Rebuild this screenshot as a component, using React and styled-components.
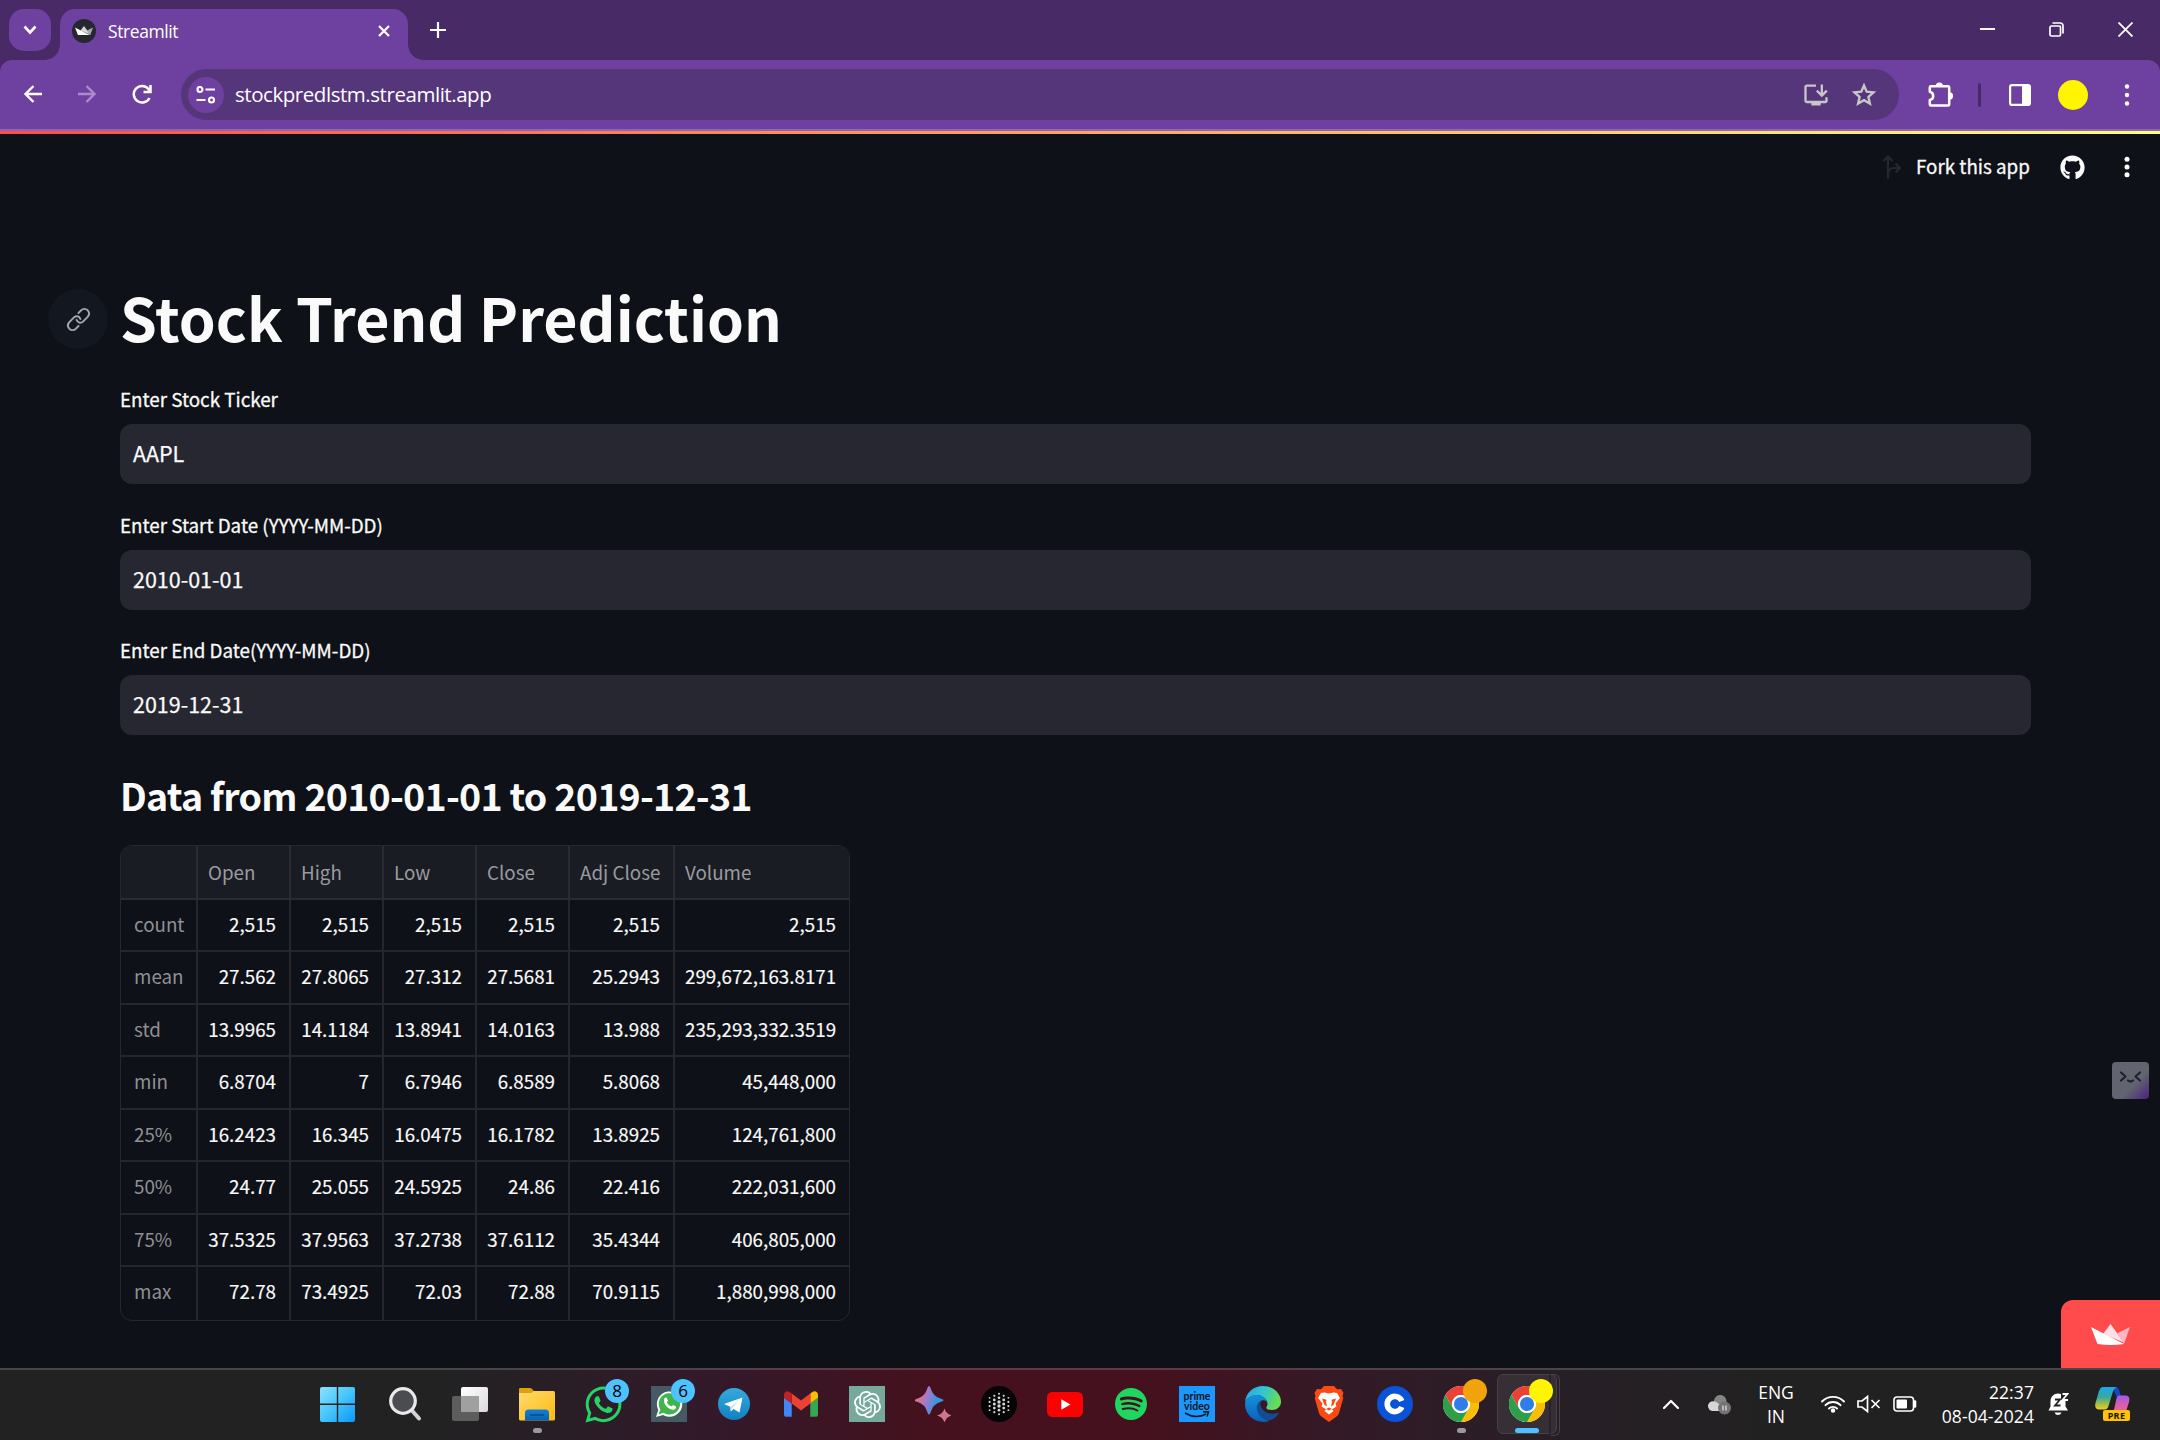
import React from 'react';
import styled, { createGlobalStyle, css } from 'styled-components';
import { FaGithub, FaWhatsapp } from 'react-icons/fa';
import { SiOpenai, SiSpotify } from 'react-icons/si';
import { MdInstallDesktop } from 'react-icons/md';

const source = '"Noto Sans CJK SC", "Noto Sans", sans-serif';
const segoe = '"Open Sans", "Noto Sans", sans-serif';

const Global = createGlobalStyle`
  * { box-sizing: border-box; }
  body { margin: 0; background: #0e1117; overflow: hidden; }
  svg { display: block; flex: none; }
`;

const Screen = styled.div`
  display: flex;
  flex-direction: column;
  width: 2160px;
  height: 1440px;
  color: #fff;
  font-family: ${segoe};
`;

/* ---------- browser chrome ---------- */
const TabStrip = styled.div`
  display: flex;
  align-items: flex-end;
  height: 60px;
  flex: none;
  padding-left: 9px;
  background: #472a66;
`;
const TabSearch = styled.div`
  display: grid;
  place-items: center;
  width: 42px;
  height: 42px;
  margin: 0 9px 9px 0;
  border-radius: 15px;
  background: #6e41a0;
`;
const Tab = styled.div`
  position: relative;
  display: flex;
  align-items: center;
  width: 348px;
  height: 51px;
  padding: 0 18px 8px 12px;
  border-radius: 15px 15px 0 0;
  background: #6e41a0;
  &::before, &::after {
    content: '';
    position: absolute;
    bottom: 0;
    width: 15px;
    height: 15px;
  }
  &::before { left: -15px; background: radial-gradient(circle at 0 0, transparent 14.5px, #6e41a0 15px); }
  &::after { right: -15px; background: radial-gradient(circle at 100% 0, transparent 14.5px, #6e41a0 15px); }
`;
const Favicon = styled.div`
  display: grid;
  place-items: center;
  width: 24px;
  height: 24px;
  margin-right: 12px;
  border-radius: 50%;
  background: #262730;
`;
const TabTitle = styled.div`
  flex: 1;
  font-size: 17.5px;
  letter-spacing: -0.4px;
  line-height: 24px;
  padding-top: 1px;
`;
const NewTab = styled.div`
  margin: 0 0 22px 22px;
`;
const WindowButtons = styled.div`
  display: flex;
  gap: 54px;
  margin: 0 27px 23px auto;
`;
const ToolbarBack = styled.div`
  flex: none;
  background: #472a66;
`;
const Toolbar = styled.div`
  display: flex;
  align-items: center;
  height: 71px;
  padding: 0 30px 0 23px;
  border-bottom: 2px solid #8c67b3;
  border-radius: 12px 12px 0 0;
  background: #6e41a0;
`;
const NavButtons = styled.div`
  display: flex;
  align-items: center;
  gap: 34px;
  width: 158px;
  padding-bottom: 1px;
`;
const Omnibox = styled.div`
  display: flex;
  align-items: center;
  width: 1718px;
  height: 51px;
  padding: 0 22px 0 7px;
  border-radius: 26px;
  background: #55367a;
  color: #c7c7c7;
`;
const SiteInfo = styled.div`
  display: grid;
  place-items: center;
  width: 36px;
  height: 36px;
  border-radius: 50%;
  background: #6e41a0;
`;
const Url = styled.div`
  flex: 1;
  padding: 0 0 2px 11px;
  color: #fff;
  font-size: 20.5px;
  letter-spacing: -0.45px;
  line-height: 28px;
`;
const OmniActions = styled.div`
  display: flex;
  align-items: center;
  gap: 21px;
`;
const Extensions = styled.div`
  display: flex;
  align-items: center;
  margin-left: auto;
`;
const Separator = styled.div`
  width: 3px;
  height: 24px;
  margin: 0 28px 0 24px;
  border-radius: 2px;
  background: #472a66;
`;
const Avatar = styled.div`
  width: 30px;
  height: 30px;
  margin: 0 36px 0 27px;
  border-radius: 50%;
  background: #fff500;
`;
const Rainbow = styled.div`
  flex: none;
  height: 3px;
  background: linear-gradient(90deg, #ff4b4b, #fffd80);
`;

/* ---------- streamlit page ---------- */
const Page = styled.div`
  position: relative;
  flex: 1;
  min-height: 0;
  background: #0e1117;
  color: #fafafa;
  font-family: ${source};
`;
const AppHeader = styled.header`
  display: flex;
  align-items: center;
  justify-content: flex-end;
  height: 66px;
  padding-right: 30px;
`;
const ForkLabel = styled.div`
  width: 113px;
  margin: -3px 31px 0 15px;
  font-size: 18.8px;
  line-height: 24px;
  white-space: nowrap;
  -webkit-text-stroke: 0.3px;
`;
const Spacer = styled.div`
  width: 39px;
`;
const Main = styled.main`
  padding: 89px 129px 0 120px;
`;
const TitleRow = styled.div`
  display: flex;
  align-items: center;
  gap: 12px;
  height: 60px;
  margin: 0 0 38px -72px;
`;
const Anchor = styled.div`
  display: grid;
  place-items: center;
  width: 60px;
  height: 60px;
  border-radius: 50%;
  background: #13171f;
`;
const Title = styled.h1`
  margin: -6px 0 0;
  font-size: 59.1px;
  font-weight: 700;
  line-height: 60px;
  white-space: nowrap;
`;
const Field = styled.label`
  display: block;
  margin-bottom: 28.7px;
`;
const FieldLabel = styled.div`
  height: 24px;
  margin-bottom: 13px;
  font-size: 18.8px;
  line-height: 24px;
  -webkit-text-stroke: 0.3px;
`;
const Input = styled.div`
  height: 60px;
  padding-left: 13px;
  border-radius: 12px;
  background: #262730;
  font-size: 21.5px;
  line-height: 57px;
  -webkit-text-stroke: 0.25px;
`;
const Subtitle = styled.h2`
  height: 50px;
  margin: 34.2px 0 25.4px;
  font-size: 37.6px;
  font-weight: 600;
  letter-spacing: -0.78px;
  line-height: 50px;
`;
const Frame = styled.div`
  display: grid;
  grid-template-columns: 77px repeat(4, 93px) 105px 174px;
  grid-template-rows: 54px repeat(8, 52.5px);
  width: 730px;
  border: 1px solid #26282d;
  border-radius: 12px;
  overflow: hidden;
`;
const Cell = styled.div`
  padding: ${p => (p.$index ? '0 10px 0 13px' : '0 13px 0 10px')};
  border: 0 solid #25272d;
  border-right-width: ${p => (p.$lastCol ? 0 : 2)}px;
  border-bottom-width: ${p => (p.$lastRow ? 0 : 2)}px;
  font-size: 18.8px;
  line-height: 48px;
  text-align: right;
  white-space: nowrap;
  ${p => !p.$index && !p.$head && css`-webkit-text-stroke: 0.15px;`}
  ${p => p.$index && css`color: #8f9094; text-align: left;`}
  ${p => p.$head && css`
    padding-right: 0;
    border-color: #2a2c33;
    background: #1a1c24;
    color: #9a9b9f;
    line-height: 51px;
    text-align: left;
  `}
`;
const HostBadge = styled.div`
  position: absolute;
  right: 0;
  bottom: 0;
  display: grid;
  place-items: center;
  width: 99px;
  height: 68px;
  border-radius: 12px 0 0 0;
  background: #ff4b4b;
`;
const Mascot = styled.div`
  position: absolute;
  right: 11px;
  top: 928px;
  width: 37px;
  height: 37px;
  border-radius: 4px;
  background: linear-gradient(135deg, #62656f 60%, #4a2280 100%);
`;

/* ---------- taskbar ---------- */
const Taskbar = styled.footer`
  display: flex;
  align-items: center;
  flex: none;
  height: 72px;
  padding-left: 306px;
  border-top: 2px solid rgba(255, 255, 255, 0.17);
  background: linear-gradient(90deg, #222223 0, #222223 440px, #33192a 720px, #45111e 930px, #45111e 1150px, #331a27 1340px, #271f26 1560px, #222122 1750px);
  background-origin: border-box;
`;
const Slot = styled.div`
  position: relative;
  display: grid;
  place-items: center;
  width: 66px;
  height: 70px;
  padding-bottom: 2px;
`;
const Active = styled.div`
  position: absolute;
  left: 3px;
  top: 4px;
  width: 60px;
  height: 60px;
  border: 1px solid #474148;
  border-radius: 6px;
  background: #363036;
  &::after {
    content: '';
    position: absolute;
    left: 51px;
    top: -1px;
    width: 8px;
    height: 60px;
    border: 1px solid #474148;
    border-left: 2px solid #282329;
    border-radius: 0 6px 6px 0;
  }
`;
const Glyph = styled.div`
  position: relative;
  display: flex;
  align-items: center;
  justify-content: center;
  width: 36px;
  height: 36px;
  margin-right: ${p => p.$nudge || 0}px;
  border-radius: ${p => p.$round || '0'};
  background: ${p => p.$bg || 'transparent'};
  color: ${p => p.$color || '#fff'};
`;
const Count = styled.div`
  position: absolute;
  left: 35px;
  top: 9px;
  width: 24px;
  height: 24px;
  border-radius: 50%;
  background: ${p => p.$bg || '#4cc2ff'};
  color: #000;
  font-size: 17px;
  line-height: 24px;
  text-align: center;
`;
const Running = styled.div`
  position: absolute;
  bottom: 7px;
  left: calc(50% - ${p => p.$w / 2}px);
  width: ${p => p.$w}px;
  height: 5px;
  border-radius: 3px;
  background: ${p => p.$c};
`;
const Prime = styled.div`
  height: 34px;
  padding-top: 4px;
  color: #0b1420;
  font-family: Lato, sans-serif;
  font-size: 10.5px;
  font-weight: 700;
  line-height: 10px;
  text-align: center;
`;
const Tray = styled.div`
  display: flex;
  align-items: center;
  flex: 1;
  height: 70px;
  padding: 0 30px 2px 103px;
`;
const TrayGap = styled.div`
  width: ${p => p.$w}px;
`;
const TrayText = styled.div`
  width: ${p => p.$w}px;
  margin: 0 ${p => p.$after}px 0 ${p => p.$before}px;
  font-size: 17.5px;
  letter-spacing: ${p => p.$track}px;
  line-height: 24px;
  text-align: ${p => p.$align};
  white-space: nowrap;
`;
const Copilot = styled.div`
  position: relative;
  width: 35px;
  height: 34px;
  margin-left: auto;
`;
const Pre = styled.div`
  position: absolute;
  left: 8px;
  bottom: 0;
  width: 27px;
  height: 11px;
  border-radius: 2px;
  background: #ffc20a;
  color: #1b1500;
  font-family: "Noto Sans", sans-serif;
  font-size: 9px;
  font-weight: 700;
  line-height: 11px;
  text-align: center;
  letter-spacing: 0.4px;
`;

/* ---------- drawings ---------- */
const Line = ({ w, h, box, d, sw = 2.2, color = '#fff', fill = 'none', cap = 'butt' }) => (
  <svg width={w} height={h} viewBox={box || `0 0 ${w} ${h}`} fill={fill} stroke={color} strokeWidth={sw} strokeLinecap={cap} strokeLinejoin={cap === 'round' ? 'round' : 'miter'}>
    <path d={d} />
  </svg>
);

const Crown = ({ w, tones }) => (
  <svg width={w} height={w * 21 / 39} viewBox="0 0 39 21">
    <path d="M12 10 19.5 0 33 18.5z" fill={tones[1]} />
    <path d="M26 9.500 39 3 33 20z" fill={tones[2]} />
    <path d="M0 3 33 20Q20 22 6.500 20z" fill={tones[0]} />
  </svg>
);

const Dots = ({ gap, r }) => (
  <svg width="6" height="24" viewBox="0 0 6 24" fill="#fff">
    <circle cx="3" cy={12 - gap} r={r} /><circle cx="3" cy="12" r={r} /><circle cx="3" cy={12 + gap} r={r} />
  </svg>
);

const Puzzle = () => (
  <svg width="26" height="26" viewBox="0 0 26 26">
    <path d="M4 4.200H20Q21.200 4.200 21.200 5.400V22.400Q21.200 23.600 20 23.600H3Q1.800 23.600 1.800 22.400V18Q5.200 17.200 5.200 13.900T1.800 9.800V5.400Q1.800 4.200 3 4.200z" fill="none" stroke="#fff" strokeWidth="2.500" strokeLinejoin="round" />
    <path d="M7.800 4A3.600 3.600 0 0 1 15 4zM21.500 10.300A3.600 3.600 0 0 1 21.500 17.500z" fill="#fff" />
  </svg>
);

const ChromeLogo = () => (
  <svg width="36" height="36" viewBox="0 0 48 48">
    <circle cx="24" cy="24" r="24" fill="#fff" />
    <path d="M3.200 12A24 24 0 0 1 44.800 12H24A12 12 0 0 0 13.600 30z" fill="#ea4335" />
    <path d="M44.800 12A24 24 0 0 1 24 48L34.400 30A12 12 0 0 0 24 12z" fill="#fbbc05" />
    <path d="M24 48A24 24 0 0 1 3.200 12L13.600 30A12 12 0 0 0 34.400 30z" fill="#2e9e4a" />
    <circle cx="24" cy="24" r="12" fill="#fff" />
    <circle cx="24" cy="24" r="9.400" fill="#2f7de9" />
  </svg>
);

const WindowsLogo = () => (
  <svg width="35" height="35" viewBox="0 0 35 35">
    <defs><linearGradient id="win" gradientUnits="userSpaceOnUse" x1="0" y1="0" x2="35" y2="35"><stop stopColor="#8be2ff" /><stop offset=".5" stopColor="#45c5fb" /><stop offset="1" stopColor="#0a97fb" /></linearGradient></defs>
    <path fill="url(#win)" d="M2 0H16.800V16.500H0V2Q0 0 2 0zM18.200 0H33Q35 0 35 2V16.500H18.200zM0 18H16.800V35H2Q0 35 0 33zM18.200 18H35V33Q35 35 33 35H18.200z" />
  </svg>
);

const SearchIcon = () => (
  <svg width="34" height="36" viewBox="0 0 34 36">
    <path d="M23.500 24 31 32.500" stroke="#d0d3d8" strokeWidth="4" strokeLinecap="round" />
    <circle cx="15" cy="15" r="12.300" fill="#4b4c4f" stroke="#e9e9eb" strokeWidth="3.200" />
  </svg>
);

const TaskView = () => (
  <svg width="36" height="36" viewBox="0 0 36 36">
    <defs><linearGradient id="tv" x1="0" y1="0" x2="1" y2="1"><stop stopColor="#fff" /><stop offset="1" stopColor="#d9d9d9" /></linearGradient></defs>
    <rect x="9" y="1" width="27" height="25" rx="2" fill="url(#tv)" />
    <rect x="0" y="10" width="27" height="25" rx="2" fill="#5d5d5d" />
    <path d="M9 10H27V26H9z" fill="#a0a0a0" />
  </svg>
);

const Folder = () => (
  <svg width="36" height="36" viewBox="0 0 36 36">
    <defs>
      <linearGradient id="fo" x1="0" y1="0" x2="1" y2="1"><stop stopColor="#ffdb6b" /><stop offset="1" stopColor="#fdb913" /></linearGradient>
      <linearGradient id="fb" x1="0" y1="0" x2="0" y2="1"><stop stopColor="#0f7fd4" /><stop offset="1" stopColor="#0a62ae" /></linearGradient>
    </defs>
    <path d="M0 3Q0 2 1.500 2H11Q12.500 2 14 4L16 7H0z" fill="#e09f06" />
    <path d="M0 7H12L15 5H34.500Q36 5 36 7V33Q36 34.500 34.500 34.500H1.500Q0 34.500 0 33z" fill="url(#fo)" />
    <path d="M6 34.500V27Q6 23.500 9.500 23.500H26.500Q30 23.500 30 27V34.500z" fill="url(#fb)" />
    <path d="M11 29H25" stroke="#06477f" strokeWidth="1.400" />
  </svg>
);

const Telegram = () => (
  <svg width="32" height="32" viewBox="0 0 32 32">
    <defs><linearGradient id="tg" x1="0" y1="0" x2="0" y2="1"><stop stopColor="#35aade" /><stop offset="1" stopColor="#1181c0" /></linearGradient></defs>
    <circle cx="16" cy="16" r="16" fill="url(#tg)" />
    <path d="M6 16 24.500 9.500 21.500 24.500 15.500 21 12.800 23.500 12.300 18.800z" fill="#fff" />
    <path d="M12.500 18.800 20.500 13.200 14 20 12.800 23.500z" fill="#c8daea" />
  </svg>
);

const Gmail = () => (
  <svg width="34" height="26" viewBox="52 42 88 66">
    <path fill="#4285f4" d="M58 108h14V74L52 59v43c0 3.320 2.690 6 6 6" />
    <path fill="#34a853" d="M120 108h14c3.320 0 6-2.690 6-6V59l-20 15" />
    <path fill="#fbbc04" d="M120 48v26l20-15v-8c0-7.420-8.470-11.650-14.400-7.200" />
    <path fill="#ea4335" d="M72 74V48l24 18 24-18v26L96 92" />
    <path fill="#c5221f" d="M52 51v8l20 15V48l-5.600-4.200c-5.940-4.450-14.400-.22-14.400 7.200" />
  </svg>
);

const Sparkle = () => (
  <svg width="36" height="36" viewBox="0 0 36 36">
    <defs>
      <linearGradient id="sp" x1="0" y1=".3" x2="1" y2=".6"><stop stopColor="#f0745a" /><stop offset=".4" stopColor="#a878c8" /><stop offset=".75" stopColor="#3f92e0" /><stop offset="1" stopColor="#2a9fe0" /></linearGradient>
      <linearGradient id="sq" x1="0" y1="1" x2="1" y2="0"><stop stopColor="#f58a48" /><stop offset=".5" stopColor="#c672a0" /><stop offset="1" stopColor="#f58a48" /></linearGradient>
    </defs>
    <path fill="url(#sp)" d="M14 0Q15.200 0 15.700 2.500Q18 10.500 26 12.800Q28.500 13.500 28.500 14.300T26 15.800Q18 18.200 15.700 26Q15 28.500 14 28.500T12.300 26Q10 18.200 2 15.800Q-.5 15 -.5 14.300T2 12.800Q10 10.500 12.300 2.500Q12.800 0 14 0z" />
    <path fill="url(#sq)" d="M29.500 22.500Q31 28 36.500 29.500Q31 31 29.500 36.500Q28 31 22 29.500Q28 28 29.500 22.500z" />
  </svg>
);

const sphereColumns = [[-9.4, 4], [-4.7, 5], [0, 6], [4.7, 5], [9.4, 4]];
const DotSphere = () => (
  <svg width="36" height="36" viewBox="0 0 36 36">
    <circle cx="18" cy="18" r="18" fill="#050505" />
    <g fill="#d5d5d5">
      {sphereColumns.flatMap(([x, n]) => Array.from({ length: n }, (_, i) => {
        const y = (i - (n - 1) / 2) * 4.1;
        return <circle key={`${x}.${i}`} cx={18 + x} cy={18 + y} r={1.9 - Math.hypot(x, y) * 0.085} />;
      }))}
    </g>
  </svg>
);

const YouTube = () => (
  <svg width="36" height="25" viewBox="0 0 36 25">
    <rect width="36" height="25" rx="5.500" fill="#f00" />
    <path d="M14.300 7.200V17.800L23.500 12.500z" fill="#fff" />
  </svg>
);

const Edge = () => (
  <svg width="36" height="36" viewBox="0 0 36 36">
    <defs>
      <linearGradient id="e1" x1="0" y1="0" x2="1" y2=".3"><stop stopColor="#2aa6e0" /><stop offset=".5" stopColor="#2fc3d6" /><stop offset="1" stopColor="#66dd55" /></linearGradient>
      <linearGradient id="e2" x1="0" y1="0" x2="0" y2="1"><stop stopColor="#1592dc" /><stop offset="1" stopColor="#0b5fb8" /></linearGradient>
    </defs>
    <path d="M0 16C1 6.500 8.500 0 18 0 29 0 36 8 36 15.500 36 21 32 24 27 24 23 24 20.500 22.700 21.500 21 24 17.500 22 12 15 9.500 8 8 2 11.500 0 16z" fill="url(#e1)" />
    <path d="M0 18C0 13 5 9 11 9 17 9 22 12.500 22 17 22 15 19 13.500 17 14.500 11 18 13 30 24 35 14 38.500 0 31.500 0 18z" fill="url(#e2)" />
    <path d="M17 14C11 16.500 10 24 15 30 19 35 25 35.500 29 32.500 31.500 30.500 33.500 28.500 34 26.500 31 28 24 28.500 20 25.500 15.500 22 14 18 17 14z" fill="#124c91" />
  </svg>
);

const Whatsapp = styled(FaWhatsapp)`
  margin: 0 -3px;
`;

const WhatsAppTile = () => (
  <svg width="36" height="36" viewBox="0 0 36 36">
    <path d="M5 31 7.300 24A12.700 12.700 0 1 1 12 29z" fill="#fff" />
    <path d="M7.500 28.500 9.300 23.500A10.700 10.700 0 1 1 12.500 26.800z" fill="#3fb54a" />
    <path d="M13.500 12Q15.500 10.500 16.200 12.800L17 14.800 15.800 16.500Q17.500 19.500 20.500 20.500L22 19 25 20.500Q25.500 23 22.500 23.800 19.500 24.200 16 21 11.800 16.500 13.500 12z" fill="#fff" />
  </svg>
);

const PrimeTile = () => (
  <Prime>
    prime<br />video
    <Line w={26} h={8} d="M1 2Q12 8.500 22 3M19 .8 24.500 1 23 5.500" sw={1.500} color="#0b1420" />
  </Prime>
);

const BraveMark = () => (
  <svg width="30" height="36" viewBox="0 0 30 36">
    <path d="M10 0H20L23 3.300 27 3 29.500 7 28.500 10 29.300 12 25 27Q24.500 29 22.500 30.500L15 36 7.500 30.500Q5.500 29 5 27L.7 12 1.500 10 .5 7 3 3 7 3.300z" fill="#fb4a12" />
    <path d="M15 7.500 19.500 6.500 23 7 26 12 21.500 17.500 22.500 20.500 18 23.200 19.500 25 15 28.500 10.500 25 12 23.200 7.500 20.500 8.500 17.500 4 12 7 7 10.500 6.500z" fill="#fff" />
    <path d="M8 12.500 12.500 13.700 12 16 13 20.500 10.500 19 9.500 16.500zM22 12.500 17.500 13.700 18 16 17 20.500 19.500 19 20.500 16.500zM12 23 15 21.500 18 23 15 24.500z" fill="#fb4a12" />
  </svg>
);

const Coin = () => <Line w={36} h={36} d="M24.800 15A7.600 7.600 0 1 0 24.800 21" sw={5.6} />;

const Cloud = () => (
  <svg width="24" height="21" viewBox="0 0 24 21">
    <path d="M7 6C8 2.500 11 .5 14 1 17 1.500 19.500 4 19.500 7.500V11H7z" fill="#858585" />
    <path d="M5 17A5 5 0 0 1 2.500 8.500C5 6.500 9 7 11 9.500L19 13V17z" fill="#d6d6d6" />
    <circle cx="17.500" cy="14" r="6.500" fill="#747474" />
    <path d="M16 11.500V16.500M19 11.500V16.500" stroke="#fff" strokeWidth="1" />
  </svg>
);

const Wifi = () => (
  <svg width="24" height="18" viewBox="0 0 24 18" fill="none" stroke="#fff" strokeWidth="1.900" strokeLinecap="round">
    <path d="M1 6.500A15.500 15.500 0 0 1 23 6.500M4.500 10.200A10.500 10.500 0 0 1 19.500 10.200M8 13.500A5.700 5.700 0 0 1 16 13.500" />
    <circle cx="12" cy="15.500" r="1.300" fill="#fff" />
  </svg>
);

const Battery = () => (
  <svg width="24" height="16" viewBox="0 0 24 16">
    <rect x="1" y="1" width="19.500" height="14" rx="3" fill="none" stroke="#fff" strokeWidth="1.600" />
    <rect x="3.500" y="3.500" width="10.500" height="9" rx="1" fill="#fff" />
    <path d="M22 5.500V10.500" stroke="#fff" strokeWidth="2.600" strokeLinecap="round" />
  </svg>
);

const Bell = () => (
  <svg width="21" height="24" viewBox="0 0 21 24">
    <path d="M2.500 9.500C2.500 4.500 6 1.500 10 1.500S17.500 4.500 17.500 9.500V14.500L20 18.500H.5L2.500 14.500z" fill="#fff" />
    <path d="M6.500 20.500H13.500Q12.500 23 10 23T6.500 20.500z" fill="#fff" />
    <path d="M13 0H21V9H13z" fill="#222" />
    <path d="M7 7.500H12L7 13.500H12.500" fill="none" stroke="#222" strokeWidth="1.800" />
    <path d="M14.500 2H19.500L14.500 8H20" fill="none" stroke="#fff" strokeWidth="1.800" />
  </svg>
);

const CopilotMark = () => (
  <svg width="35" height="34" viewBox="0 0 35 34">
    <defs>
      <linearGradient id="c1" x1="0" y1="0" x2="0" y2="1"><stop stopColor="#19a8f0" /><stop offset=".45" stopColor="#3aa89a" /><stop offset="1" stopColor="#f5cd12" /></linearGradient>
      <linearGradient id="c2" x1="0" y1="0" x2="0" y2="1"><stop stopColor="#a35ae8" /><stop offset=".6" stopColor="#ee5f93" /><stop offset="1" stopColor="#fa8a5a" /></linearGradient>
    </defs>
    <path d="M18 0H20Q23.500 0 24.500 4L25.500 8.500H29Q24 8.500 22.500 12L20 6z" fill="#1846c8" />
    <path d="M8 0H22Q19 1 17.500 6L13.500 19Q12.500 22.500 9.500 22.500H4Q-1 22 .5 16L4 4Q5.500 0 8 0z" fill="url(#c1)" />
    <path d="M24 8.500H31Q35.500 9 34 15L31.500 23Q30 31 24 31H14Q17 30 18.500 25L21.500 11.500Q22 9 24 8.500z" fill="url(#c2)" />
  </svg>
);

/* ---------- data ---------- */
const fields = [
  ['Enter Stock Ticker', 'AAPL'],
  ['Enter Start Date (YYYY-MM-DD)', '2010-01-01'],
  ['Enter End Date(YYYY-MM-DD)', '2019-12-31'],
];
const rows = [
  ['', 'Open', 'High', 'Low', 'Close', 'Adj Close', 'Volume'],
  ['count', '2,515', '2,515', '2,515', '2,515', '2,515', '2,515'],
  ['mean', '27.562', '27.8065', '27.312', '27.5681', '25.2943', '299,672,163.8171'],
  ['std', '13.9965', '14.1184', '13.8941', '14.0163', '13.988', '235,293,332.3519'],
  ['min', '6.8704', '7', '6.7946', '6.8589', '5.8068', '45,448,000'],
  ['25%', '16.2423', '16.345', '16.0475', '16.1782', '13.8925', '124,761,800'],
  ['50%', '24.77', '25.055', '24.5925', '24.86', '22.416', '222,031,600'],
  ['75%', '37.5325', '37.9563', '37.2738', '37.6112', '35.4344', '406,805,000'],
  ['max', '72.78', '73.4925', '72.03', '72.88', '70.9115', '1,880,998,000'],
];
const apps = [
  { id: 'start', icon: <WindowsLogo />, nudge: 4 },
  { id: 'search', icon: <SearchIcon /> },
  { id: 'taskview', icon: <TaskView />, nudge: 2 },
  { id: 'explorer', icon: <Folder />, run: [9, '#9a9a9b'] },
  { id: 'whatsapp', icon: <Whatsapp size={41} />, color: '#25d366', badge: '8' },
  { id: 'whatsapp-web', icon: <WhatsAppTile />, bg: '#465a64', badge: '6' },
  { id: 'telegram', icon: <Telegram />, nudge: 2 },
  { id: 'gmail', icon: <Gmail /> },
  { id: 'chatgpt', icon: <SiOpenai size={27} />, bg: '#75a99c' },
  { id: 'bard', icon: <Sparkle /> },
  { id: 'sphere', icon: <DotSphere /> },
  { id: 'youtube', icon: <YouTube /> },
  { id: 'spotify', icon: <SiSpotify size={32} />, color: '#1ed760' },
  { id: 'prime', icon: <PrimeTile />, bg: '#1a98ff' },
  { id: 'edge', icon: <Edge /> },
  { id: 'brave', icon: <BraveMark /> },
  { id: 'coinbase', icon: <Coin />, bg: '#0a53d6', round: '50%' },
  { id: 'chrome-1', icon: <ChromeLogo />, dot: '#f0a30a', run: [9, '#9a9a9b'] },
  { id: 'chrome-2', icon: <ChromeLogo />, dot: '#fff500', run: [24, '#4cc2ff'], active: true },
];

const Browser = () => (
  <>
    <TabStrip>
      <TabSearch><Line w={14} h={10} d="M1.500 1.500 7 7.500 12.500 1.500" sw={2.6} /></TabSearch>
      <Tab>
        <Favicon><Crown w={18} tones={['#fff', '#d8d8da', '#a9a9ad']} /></Favicon>
        <TabTitle>Streamlit</TabTitle>
        <Line w={12} h={12} d="M1 1 11 11M11 1 1 11" />
      </Tab>
      <NewTab><Line w={16} h={16} d="M8 0V16M0 8H16" /></NewTab>
      <WindowButtons>
        <Line w={15} h={15} d="M0 7H15" sw={2} />
        <Line w={15} h={15} d="M1 5.500Q1 4 2.500 4H10Q11.500 4 11.500 5.500V12.500Q11.500 14 10 14H2.500Q1 14 1 12.500zM3.500 1H11Q14 1 14 4V11.500" sw={1.7} />
        <Line w={15} h={15} d="M.5.5 14.500 14.500M14.500.5.5 14.500" sw={1.8} />
      </WindowButtons>
    </TabStrip>
    <ToolbarBack>
      <Toolbar>
        <NavButtons>
          <Line w={20} h={18} d="M19 9H3M10.500 1 2.500 9 10.500 17" sw={2.4} />
          <Line w={20} h={18} d="M1 9H17M9.500 1 17.500 9 9.500 17" sw={2.4} color="#a98cc8" />
          <Line w={22} h={20} d="M18.500 14A8.300 8.300 0 1 1 17.500 5L19 7.500M19.500 1V8H12.500" sw={2.5} />
        </NavButtons>
        <Omnibox>
          <SiteInfo>
            <Line w={20} h={18} d="M9.500 3.500H19M.5 14H9.500M6.500 3.500A2.500 2.500 0 1 1 1.500 3.500 2.500 2.500 0 1 1 6.500 3.500M18 14A2.500 2.500 0 1 1 13 14 2.500 2.500 0 1 1 18 14" sw={2.1} />
          </SiteInfo>
          <Url>stockpredlstm.streamlit.app</Url>
          <OmniActions>
            <MdInstallDesktop size={28} />
            <Line w={26} h={25} color="#c7c7c7" sw={2.4} d="M13 3.500 15.700 9.700 22.500 10.400 17.400 14.900 18.900 21.600 13 18.100 7.100 21.600 8.600 14.900 3.500 10.400 10.300 9.700z" />
          </OmniActions>
        </Omnibox>
        <Extensions>
          <Puzzle />
          <Separator />
          <svg width="22" height="22" viewBox="0 0 22 22"><rect x="1.100" y="1.100" width="19.800" height="19.800" rx="2" fill="none" stroke="#fff" strokeWidth="2.200" /><path d="M13 1H21V21H13z" fill="#fff" /></svg>
          <Avatar />
          <Dots gap={8.5} r={2.2} />
        </Extensions>
      </Toolbar>
    </ToolbarBack>
    <Rainbow />
  </>
);

const StreamlitApp = () => (
  <Page>
    <AppHeader>
      <Line w={18} h={24} d="M5 24V2M.5 6 5 1.500 9.500 6M5 20Q5 13 11 13H16M12.500 8.500 17 13 12.500 17.500" color="#262830" sw={2.2} />
      <ForkLabel>Fork this app</ForkLabel>
      <FaGithub size={25} />
      <Spacer />
      <Dots gap={7.7} r={2.5} />
    </AppHeader>
    <Main>
      <TitleRow>
        <Anchor>
          <Line w={25} h={25} box="0 0 24 24" cap="round" sw={1.9} color="#a3a5aa" d="M10.200 12.500C11.300 15.500 14.500 15.800 16.300 14L20.800 9.500C22.500 7.500 22.500 5 20.800 3.200 19 1.500 16.300 1.500 14.500 3.200L12 5.700M13.800 11.500C12.700 8.500 9.500 8.200 7.700 10L3.200 14.500C1.500 16.500 1.500 19 3.200 20.800 5 22.500 7.700 22.500 9.500 20.800L12 18.300" />
        </Anchor>
        <Title>Stock Trend Prediction</Title>
      </TitleRow>
      {fields.map(([label, value]) => (
        <Field key={label}>
          <FieldLabel>{label}</FieldLabel>
          <Input>{value}</Input>
        </Field>
      ))}
      <Subtitle>Data from 2010-01-01 to 2019-12-31</Subtitle>
      <Frame>
        {rows.map((row, r) => row.map((value, c) => (
          <Cell key={`${r}-${c}`} $head={r === 0} $index={c === 0} $lastCol={c === 6} $lastRow={r === 8}>{value}</Cell>
        )))}
      </Frame>
    </Main>
    <Mascot>
      <Line w={37} h={37} d="M9 10.500 13.500 14.500 9 18.500M28 10.500 23.500 14.500 28 18.500M16 18.500Q18.500 20.500 21 18.500" color="#1c2230" sw={2.2} cap="round" />
    </Mascot>
    <HostBadge><Crown w={39} tones={['#fff', '#ffdfe8', '#ffb5c0']} /></HostBadge>
  </Page>
);

const Desktop = () => (
  <Taskbar>
    {apps.map(a => (
      <Slot key={a.id}>
        {a.active && <Active />}
        <Glyph $bg={a.bg} $round={a.round} $color={a.color} $nudge={a.nudge}>{a.icon}</Glyph>
        {a.badge && <Count>{a.badge}</Count>}
        {a.dot && <Count $bg={a.dot} />}
        {a.run && <Running $w={a.run[0]} $c={a.run[1]} />}
      </Slot>
    ))}
    <Tray>
      <Line w={16} h={10} d="M1 9 8 2 15 9" sw={2.2} cap="round" />
      <TrayGap $w={28} />
      <Cloud />
      <TrayText $w={36} $before={27} $after={27} $align="center" $track={-0.1}>ENG<br />IN</TrayText>
      <Wifi />
      <TrayGap $w={12} />
      <Line w={24} h={18} d="M1 6H5L10.500 1.500V16.500L5 12H1zM14.500 5 22.500 13M22.500 5 14.500 13" sw={1.7} />
      <TrayGap $w={12} />
      <Battery />
      <TrayText $w={94} $before={23} $after={14} $align="right" $track={0.1}>22:37<br />08-04-2024</TrayText>
      <Bell />
      <Copilot><CopilotMark /><Pre>PRE</Pre></Copilot>
    </Tray>
  </Taskbar>
);

export default function App() {
  return (
    <Screen>
      <Global />
      <Browser />
      <StreamlitApp />
      <Desktop />
    </Screen>
  );
}
